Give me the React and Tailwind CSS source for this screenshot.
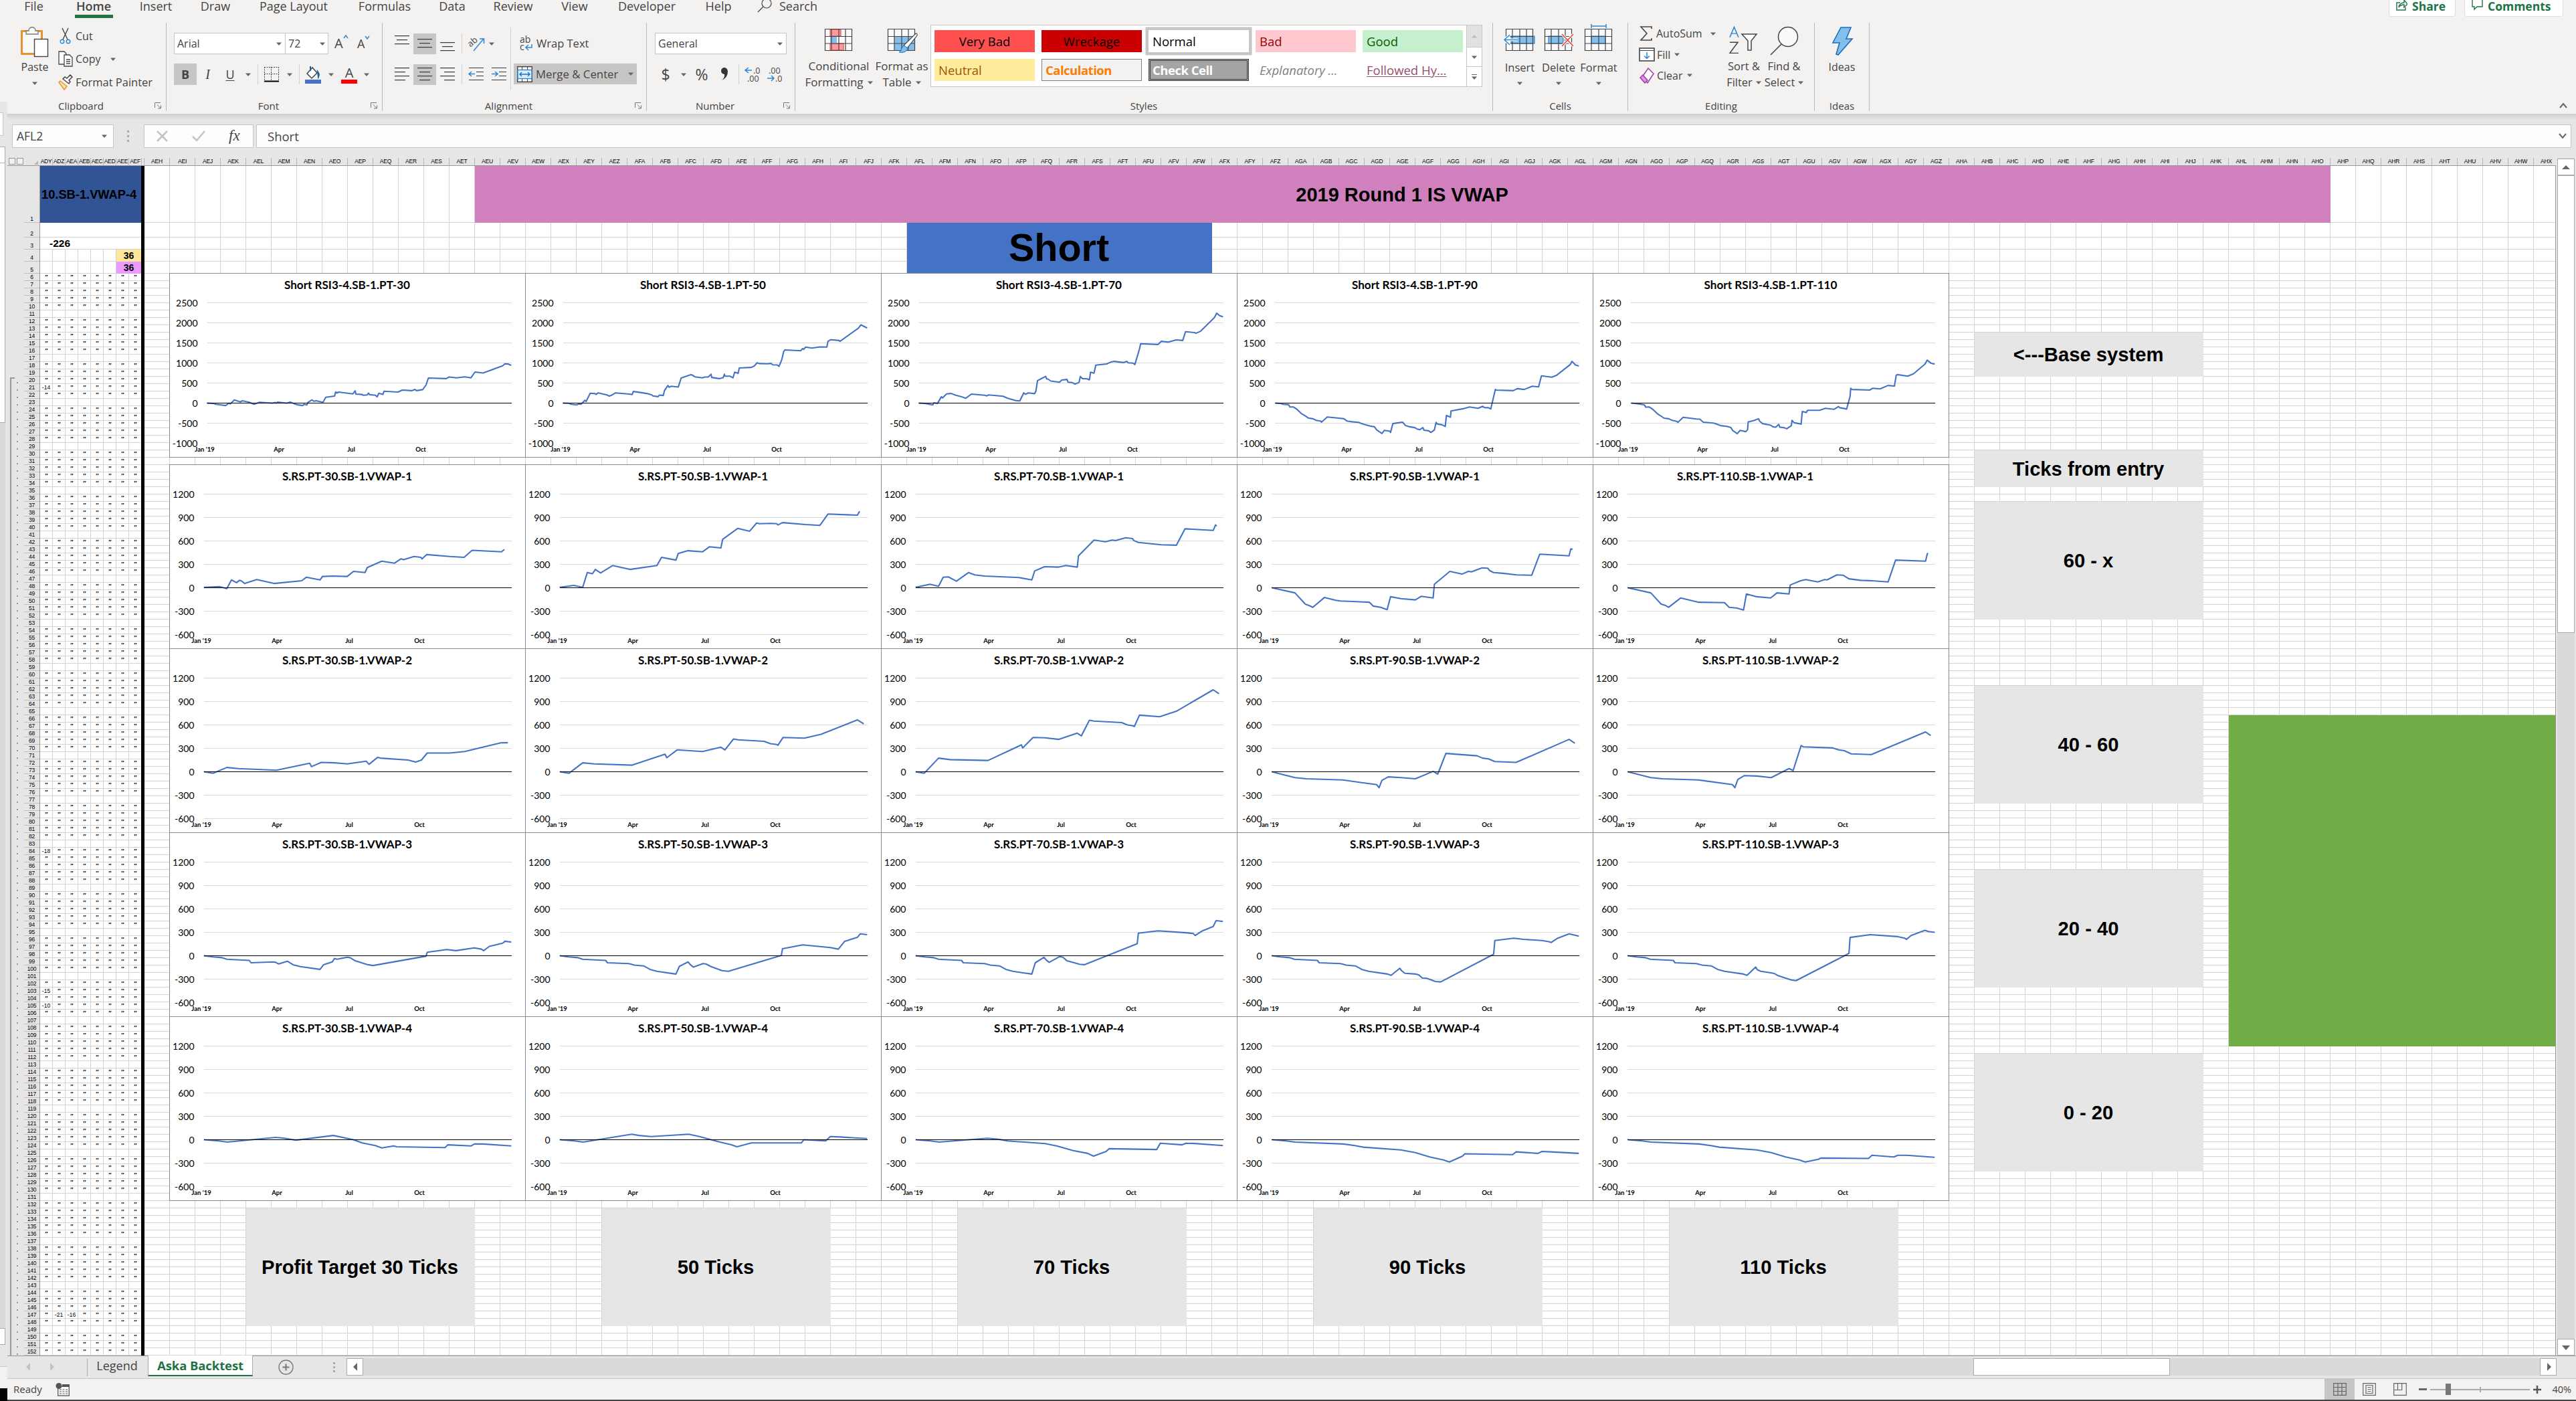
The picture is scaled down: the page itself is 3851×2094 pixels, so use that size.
import React from "react";

const UI = "font-['Open_Sans',sans-serif]";
const ARIAL = "font-['Liberation_Sans',sans-serif]";

/* ---------- chart data: x runs 0-618 over the chart's width ---------- */

const HEAD_3 = "92,-25 100,-45 140,-60 143,-90 180,-100 190,-120 206,-130 217,-175 229,-200 262,-235";

const CHARTS = [
  {
    place: "row-[6/31]",
    base: true,
    items: [
      ["Short RSI3-4.SB-1.PT-30", "65,0 78,-10 81,-30 98,-60 104,0 106,-20 113,80 124,30 127,60 139,20 147,-30 157,20 179,0 184,15 186,0 188,25 204,0 210,25 222,-40 232,-60 234,-30 239,-45 241,20 248,80 251,45 255,60 267,20 272,145 287,175 289,280 291,250 294,275 319,230 323,305 324,225 335,215 337,195 344,205 346,250 348,210 358,195 361,155 364,245 371,215 373,295 397,275 405,325 421,310 427,340 429,310 440,335 446,450 450,625 481,610 486,650 499,630 513,655 524,630 531,775 545,750 579,930 583,980 588,975 594,940"],
      ["Short RSI3-4.SB-1.PT-50", "65,0 76,-5 80,-30 90,-45 93,-20 97,-30 104,70 106,40 113,245 122,235 123,215 127,255 142,205 146,175 150,195 157,255 181,225 186,215 188,290 202,260 213,235 220,205 222,180 231,160 233,200 240,190 242,310 248,440 250,395 254,420 266,400 271,625 281,675 288,710 290,700 295,655 308,630 312,650 318,650 323,720 324,640 337,610 344,635 346,720 347,670 356,670 361,630 364,770 370,740 372,875 393,890 398,925 403,1005 407,985 421,980 427,990 430,955 438,950 441,915 446,1090 449,1280 451,1325 479,1305 482,1360 484,1340 487,1395 498,1370 512,1400 524,1395 526,1540 531,1580 545,1560 547,1540 579,1870 583,1950 594,1870"],
      ["Short RSI3-4.SB-1.PT-70", "65,0 78,-10 90,-45 92,10 98,-10 105,160 107,130 114,230 122,240 129,200 140,160 147,120 157,225 180,195 184,180 187,205 212,170 220,120 233,65 241,55 248,255 251,220 256,255 267,235 269,300 272,560 280,620 286,665 288,600 290,600 295,550 310,520 314,575 323,590 325,520 332,510 337,475 344,515 346,660 350,610 358,605 362,580 364,770 370,745 373,945 392,975 398,1015 405,1040 421,1010 427,1040 429,1005 438,995 441,960 449,1350 451,1480 481,1460 487,1540 499,1520 513,1575 524,1560 529,1780 545,1755 547,1740 555,1790 579,2130 583,2240 588,2180 594,2150"],
      ["Short RSI3-4.SB-1.PT-90", "67,0 77,-10 80,-30 90,-40 92,-95 98,-95 104,-150 112,-260 119,-320 124,-370 132,-390 138,-430 146,-450 147,-475 157,-345 180,-380 186,-390 191,-445 200,-465 211,-480 221,-530 231,-570 239,-590 243,-670 252,-755 256,-680 266,-700 267,-730 271,-510 281,-490 288,-475 293,-560 300,-590 309,-610 313,-645 318,-660 323,-610 325,-675 333,-690 337,-730 343,-670 346,-480 348,-520 356,-540 362,-580 364,-310 371,-350 372,-195 393,-140 404,-95 419,-130 427,-80 430,-110 437,-115 441,-145 449,340 450,325 480,310 487,360 499,340 513,420 524,405 529,680 547,645 555,690 579,960 582,1040 588,950 594,925"],
      ["Short RSI3-4.SB-1.PT-110", "67,0 80,-20 90,-45 92,-100 98,-95 104,-150 112,-260 124,-375 132,-390 138,-430 146,-455 148,-480 157,-355 180,-395 186,-400 192,-475 211,-500 222,-560 233,-580 240,-610 243,-680 251,-760 256,-680 266,-710 269,-660 270,-470 281,-430 288,-390 290,-450 295,-510 309,-550 313,-590 318,-600 323,-530 325,-600 333,-615 337,-640 345,-560 346,-430 350,-490 358,-510 362,-525 364,-210 371,-235 373,-180 394,-180 404,-130 419,-155 427,-85 429,-115 439,-140 441,-150 447,170 448,370 450,340 481,325 486,370 499,355 513,440 524,425 527,690 529,710 547,670 557,730 577,970 581,1070 588,990 594,970"],
    ],
  },
  {
    place: "row-[32/57]",
    items: [
      ["S.RS.PT-30.SB-1.VWAP-1", "60,5 87,15 100,-10 108,100 117,65 122,95 125,90 131,55 152,105 182,55 230,90 238,135 262,100 266,145 283,150 309,145 320,210 340,195 344,260 369,340 391,315 402,370 407,360 425,400 437,390 439,370 447,425 487,400 512,390 526,480 577,460 582,490"],
      ["S.RS.PT-50.SB-1.VWAP-1", "60,5 85,30 100,5 108,195 117,180 122,235 131,190 152,285 182,235 229,285 237,390 262,355 266,440 283,475 308,460 320,525 340,510 343,620 369,760 390,725 402,830 407,820 427,825 437,820 439,805 447,835 487,810 512,800 526,945 577,930 581,980"],
      ["S.RS.PT-70.SB-1.VWAP-1", "60,5 85,45 100,20 108,135 117,140 131,85 152,195 163,165 180,150 240,130 262,100 267,215 284,270 309,265 321,285 341,265 343,410 370,610 390,590 401,610 407,605 425,640 437,630 439,605 447,580 487,550 513,545 528,755 577,735 581,805 583,790"],
      ["S.RS.PT-90.SB-1.VWAP-1", "61,0 101,-65 119,-210 126,-230 132,-250 152,-125 172,-160 180,-170 230,-185 237,-235 250,-250 261,-280 267,-115 285,-140 310,-155 320,-110 341,-130 343,45 370,210 391,175 402,210 408,205 426,255 436,250 439,220 446,195 462,185 486,165 512,160 526,430 577,410 580,500 583,490"],
      ["S.RS.PT-110.SB-1.VWAP-1", "61,0 101,-65 119,-210 126,-225 132,-250 153,-130 183,-185 229,-190 237,-250 250,-260 262,-285 267,-80 285,-115 309,-130 320,-65 341,-80 343,35 361,90 370,105 391,75 403,105 407,100 424,165 435,160 445,115 465,95 485,90 513,75 526,355 578,340 581,430 582,445", 228],
    ],
  },
  {
    place: "row-[57/82]",
    items: [
      ["S.RS.PT-30.SB-1.VWAP-2", "60,0 76,-20 100,55 120,40 186,20 244,110 247,65 264,120 287,115 309,100 342,135 347,95 362,185 367,175 415,150 428,125 438,150 448,240 487,240 513,260 576,370 588,372"],
      ["S.RS.PT-50.SB-1.VWAP-2", "60,0 76,-20 100,115 120,100 186,85 243,225 246,180 264,280 308,260 340,315 347,280 362,420 370,410 415,390 426,360 437,350 439,340 448,440 485,430 514,480 577,665 588,615"],
      ["S.RS.PT-70.SB-1.VWAP-2", "60,0 75,-20 100,175 120,155 186,145 244,345 246,305 264,440 285,435 309,415 341,495 348,460 362,660 370,650 418,630 428,600 437,590 440,580 449,725 484,705 513,775 577,1050 587,1000"],
      ["S.RS.PT-90.SB-1.VWAP-2", "61,0 79,-35 101,-75 121,-90 184,-105 243,-165 247,-205 252,-110 263,-65 285,-75 310,-90 341,5 349,-30 363,235 417,205 427,175 437,165 448,130 485,120 577,415 587,365"],
      ["S.RS.PT-110.SB-1.VWAP-2", "61,0 79,-35 101,-75 121,-90 184,-105 243,-165 247,-205 252,-100 263,-50 285,-55 310,-75 341,40 348,15 362,335 366,320 417,305 427,280 437,270 449,230 484,220 578,510 587,465"],
    ],
  },
  {
    place: "row-[82/107]",
    items: [
      ["S.RS.PT-30.SB-1.VWAP-3", "60,0 76,-15 92,-25 100,-45 139,-60 142,-90 180,-80 185,-85 190,-105 205,-70 215,-115 228,-140 262,-175 268,-115 283,-80 287,-35 291,-45 309,-20 314,-25 323,-65 345,-115 354,-125 446,-5 448,45 482,80 498,65 530,100 542,85 546,65 556,120 579,160 583,185 594,175"],
      ["S.RS.PT-50.SB-1.VWAP-3", `60,0 76,-15 ${HEAD_3} 268,-135 283,-80 287,-115 292,-145 309,-100 314,-105 323,-140 342,-190 353,-200 445,5 447,90 482,140 530,105 544,85 555,185 577,235 582,280 594,270`],
      ["S.RS.PT-70.SB-1.VWAP-3", `60,0 76,-15 ${HEAD_3} 268,-90 283,-20 287,-55 292,-85 308,-20 310,-10 316,-20 323,-65 345,-110 353,-115 445,155 447,290 481,320 530,295 542,285 546,260 557,315 577,375 582,450 594,440`],
      ["S.RS.PT-90.SB-1.VWAP-3", `61,0 76,-15 ${HEAD_3} 268,-250 283,-160 286,-190 292,-225 311,-235 316,-245 322,-285 330,-290 345,-330 354,-335 446,20 448,195 481,225 498,210 530,195 542,180 546,170 556,220 577,280 594,250`],
      ["S.RS.PT-110.SB-1.VWAP-3", `61,0 76,-15 ${HEAD_3} 268,-250 283,-145 286,-180 292,-200 311,-220 316,-230 322,-255 345,-310 353,-320 445,30 447,235 482,270 530,245 542,225 545,210 553,260 577,325 583,310 594,300`],
    ],
  },
  {
    place: "row-[107/132]",
    items: [
      ["S.RS.PT-30.SB-1.VWAP-4", "60,0 86,-15 101,-30 185,30 200,20 220,-5 285,55 320,0 335,-40 358,-75 369,-105 390,-80 395,-90 479,-100 484,-65 524,-80 530,-55 545,-55 594,-80"],
      ["S.RS.PT-50.SB-1.VWAP-4", "60,0 86,-15 101,-30 185,70 198,55 219,40 284,70 303,40 336,-25 358,-65 368,-90 393,-40 480,-40 484,0 522,-15 530,40 542,38 594,15"],
      ["S.RS.PT-70.SB-1.VWAP-4", "60,0 86,-15 101,-30 185,20 205,5 220,-15 285,-50 305,-80 334,-140 359,-175 369,-210 391,-150 396,-115 479,-125 485,-45 523,-65 530,-45 545,-48 594,-75"],
      ["S.RS.PT-90.SB-1.VWAP-4", "61,0 86,-15 101,-30 185,-55 205,-75 220,-95 285,-130 310,-165 335,-220 359,-260 369,-285 392,-210 396,-180 479,-190 485,-155 523,-175 530,-150 545,-155 594,-175"],
      ["S.RS.PT-110.SB-1.VWAP-4", "61,0 86,-15 101,-30 185,-55 205,-75 220,-95 285,-130 310,-165 335,-220 359,-260 369,-285 392,-250 396,-235 479,-240 485,-200 523,-220 530,-200 545,-200 594,-225"],
    ],
  },
];

const CHART_COLS = ["col-[2/16]", "col-[16/30]", "col-[30/44]", "col-[44/58]", "col-[58/72]"];

function LineChart({ title, points, base, titleX = 266, className }) {
  const zero = base ? 194 : 184;
  const unit = base ? 30 / 500 : 35 / 300;
  const left = base ? 57 : 52;
  const labelX = base ? 42.5 : 37.5;
  const ticks = base ? [2500, 2000, 1500, 1000, 500, 0, -500, -1000] : [1200, 900, 600, 300, 0, -300, -600];
  const months = base
    ? [["Jan '19", 53], ["Apr", 164], ["Jul", 272], ["Oct", 376]]
    : [["Jan '19", 48], ["Apr", 161], ["Jul", 269], ["Oct", 374]];
  const line = points
    .split(" ")
    .map((p) => {
      const [x, v] = p.split(",").map(Number);
      return `${((x * 532) / 618).toFixed(1)},${(zero + 0.5 - v * unit).toFixed(1)}`;
    })
    .join(" ");
  const wide = title.includes("110");
  const titleW = base ? (wide ? 199 : 188) : wide ? 204 : 194;
  return (
    <svg className={`-ml-px -mt-px h-[276px] w-[533px] font-['Lato',sans-serif] font-normal ${className}`} viewBox="0 0 533 276">
      <rect x="0.5" y="0.5" width="532" height="275" fill="#fff" stroke="#8a8a8a" />
      <text x={titleX} y="24" textAnchor="middle" fontSize="17.5" fontWeight="700" textLength={titleW} lengthAdjust="spacingAndGlyphs">
        {title}
      </text>
      {ticks.map((t) => {
        const y = zero - t * unit + 0.5;
        return (
          <g key={t}>
            {t !== 0 && <line x1={left} x2="512" y1={y} y2={y} stroke="#d9d9d9" />}
            <text x={labelX} y={y + 5} textAnchor="end" fontSize="14">{t}</text>
          </g>
        );
      })}
      <polyline points={line} fill="none" stroke="#4472c4" strokeWidth="2.1" strokeLinejoin="round" />
      <line x1={left} x2="512" y1={zero + 0.5} y2={zero + 0.5} stroke="#000" />
      {months.map(([m, x]) => (
        <text key={m} x={x} y="267" textAnchor="middle" fontSize="9.5" fontWeight="700">{m}</text>
      ))}
    </svg>
  );
}

/* ---------- small pieces ---------- */

function Caret({ className = "" }) {
  return (
    <svg className={`h-[5px] w-2 shrink-0 ${className}`} viewBox="0 0 8 5">
      <path d="M0 0.5h8L4 5z" fill="#666" />
    </svg>
  );
}

function Lines({ rows, className = "" }) {
  return (
    <svg className={`h-[31px] w-[34px] ${className}`} viewBox="0 0 34 31">
      {rows.map(([x, w, y]) => (
        <rect key={y} x={x} y={y} width={w} height="1.2" fill="#3b3b3b" />
      ))}
    </svg>
  );
}

function Group({ label, width, launcher, children }) {
  return (
    <div className={`mt-[34px] flex h-[132px] shrink-0 flex-col border-r border-[#bdbbb9] ${width}`}>
      <div className="flex h-[116px]">{children}</div>
      <div className="flex h-4 items-center text-[15px] leading-4">
        <span className="flex-1 text-center">{label}</span>
        {launcher && (
          <svg className="mr-[6px] h-[10px] w-[11px]" viewBox="0 0 11 10" fill="none" stroke="#777">
            <path d="M0.5 8V0.5H9M4 3.5l5 5M9.5 4.5v4.5H5" />
          </svg>
        )}
      </div>
    </div>
  );
}

function TableIcon({ accent, children }) {
  return (
    <svg className="h-[46px] w-[50px]" viewBox="0 0 50 46">
      <rect x="4" y="9" width="41" height="33" fill="#fafafa" />
      {accent}
      <path d="M4.5 9v33M14 9v33M35 9v33M44.5 9v33M25 9v33M4 9.5h41M4 20.5h41M4 31h41M4 41.5h41" stroke="#444" strokeWidth="1.2" fill="none" />
      {children}
    </svg>
  );
}

function Sep({ className = "" }) {
  return <div className={`w-px shrink-0 bg-[#d2d0ce] ${className}`} />;
}

/* ---------- ribbon ---------- */

const TABS = [
  ["File", "w-[79px]"],
  ["Home", "w-[100px] font-semibold"],
  ["Insert", "w-[86px]"],
  ["Draw", "w-[92px]"],
  ["Page Layout", "w-[142px]"],
  ["Formulas", "w-[130px]"],
  ["Data", "w-[72px]"],
  ["Review", "w-[110px]"],
  ["View", "w-[74px]"],
  ["Developer", "w-[142px]"],
  ["Help", "w-[72px]"],
];

function TabStrip() {
  return (
    <div className="-mb-[34px] flex h-[34px] justify-between text-[18px] leading-[18px]">
      <div className="flex">
        {TABS.map(([t, w]) => (
          <div key={t} className={`flex h-[27px] shrink-0 flex-col items-center ${w}`}>
            <span className="whitespace-nowrap">{t}</span>
            {t === "Home" && <span className="mt-1 h-[5px] w-[57px] shrink-0 bg-[#217346]" />}
          </div>
        ))}
        <svg className="ml-[21px] h-5 w-6" viewBox="0 0 24 20" fill="none" stroke="#444" strokeWidth="1.2">
          <circle cx="15" cy="5" r="7" />
          <path d="M10 10L2 18" />
        </svg>
        <span className="ml-[10px]">Search</span>
      </div>
      <div className="mr-[19px] flex gap-[13px] font-bold text-[#217346]">
        <div className="flex h-[25px] w-[100px] items-start gap-[7px] rounded-b border-x border-b border-[#e1dfdd] bg-white pl-[10px]">
          <svg className="h-4 w-[17px]" viewBox="0 0 17 16" fill="none" stroke="#217346" strokeWidth="1.4">
            <path d="M6 4H1v11h13v-4M4 11c1-5 4-7 8-7V0l5 6-5 5V7c-4 0-6 1-8 4z" />
          </svg>
          <span className="text-[17.5px]">Share</span>
        </div>
        <div className="flex h-[25px] w-[148px] items-start gap-[7px] rounded-b border-x border-b border-[#e1dfdd] bg-white pl-[10px]">
          <svg className="h-4 w-[17px]" viewBox="0 0 17 16" fill="none" stroke="#217346" strokeWidth="1.4">
            <path d="M1 0v10h3v4l4-4h8V0" />
          </svg>
          <span className="text-[17.5px]">Comments</span>
        </div>
      </div>
    </div>
  );
}

function ClipboardGroup() {
  return (
    <Group label="Clipboard" width="w-[238px]" launcher>
      <div className="ml-[16px] flex w-[50px] flex-col items-center pt-[6px]">
        <svg className="h-[46px] w-[42px]" viewBox="0 0 42 46">
          <rect x="1.5" y="6.500" width="30" height="34" fill="#fafafa" stroke="#e8912d" strokeWidth="3" />
          <path d="M8 11V6h4c0-7 10-7 10 0h4v5z" fill="#fafafa" stroke="#777" strokeWidth="1.3" />
          <rect x="20.500" y="18.500" width="20" height="26" fill="#fff" stroke="#444" strokeWidth="1.4" />
        </svg>
        <span className="mt-1 leading-5">Paste</span>
        <Caret className="mt-3" />
      </div>
      <div className="ml-[10px] flex flex-col pt-[3px]">
        <div className="flex h-[33px] items-center gap-[4px]">
          <svg className="h-[26px] w-[22px]" viewBox="0 0 22 26" fill="none" strokeWidth="1.400">
            <path d="M6 1l8 17M15 1L7 18" stroke="#444" />
            <circle cx="6" cy="21" r="2.800" stroke="#2b88d8" />
            <circle cx="15" cy="21" r="2.800" stroke="#2b88d8" />
          </svg>
          Cut
        </div>
        <div className="flex h-[36px] items-center gap-[4px]">
          <svg className="h-6 w-[22px]" viewBox="0 0 22 24" fill="#fff" stroke="#444" strokeWidth="1.300">
            <path d="M1 1h8l3 3v16H1z" />
            <path d="M9 6h8l4 4v13H9zM12 13h6M12 16h6M12 19h6" />
          </svg>
          Copy <Caret className="ml-[10px]" />
        </div>
        <div className="flex h-[34px] items-center gap-[4px]">
          <svg className="h-6 w-[22px]" viewBox="0 0 22 24" strokeWidth="1.500">
            <path d="M3 10l10 8-4 5-8-11z" fill="#fbe0b8" stroke="#e8912d" />
            <path d="M7 7l9 7 2-3-2-2 5-5-3-3-5 5-3-2z" fill="#fff" stroke="#444" />
          </svg>
          <span className="whitespace-nowrap text-[16.5px]">Format Painter</span>
        </div>
      </div>
    </Group>
  );
}

function FontGroup() {
  return (
    <Group label="Font" width="w-[323px]" launcher>
      <div className="ml-[11px] flex flex-col pt-[15px]">
        <div className="flex h-8 items-center">
          <div className="flex h-8 w-[167px] items-center justify-between border border-[#c6c6c6] bg-white pl-1 pr-[5px]">Arial <Caret /></div>
          <div className="flex h-8 w-[64px] items-center justify-between border border-l-0 border-[#c6c6c6] bg-white px-1">72 <Caret /></div>
          <div className="ml-[9px] flex w-[34px] text-[20px]">A<svg className="h-2 w-2" viewBox="0 0 8 8"><path d="M1 7l3-4 3 4" stroke="#2b88d8" strokeWidth="1.500" fill="none" /></svg></div>
          <div className="flex text-[18px]">A<svg className="h-2 w-2" viewBox="0 0 8 8"><path d="M1 2l3 4 3-4" stroke="#2b88d8" strokeWidth="1.500" fill="none" /></svg></div>
        </div>
        <div className="mt-[14px] flex h-[32px] items-center text-[18px]">
          <div className="flex h-8 w-[34px] items-center justify-center bg-[#c8c6c4] font-bold">B</div>
          <div className="w-[33px] text-center font-['Liberation_Serif',serif] text-[20px] italic">I</div>
          <div className="w-[34px] text-center underline underline-offset-2">U</div>
          <div className="flex w-5 justify-center"><Caret /></div>
          <Sep className="mx-1 h-[30px]" />
          <svg className="h-[26px] w-8" viewBox="0 0 32 26" fill="none">
            <path d="M5 2.500h22M5 12.500h22M5.500 2v20M15.500 2v20M26.500 2v20" stroke="#444" strokeDasharray="2 1.500" />
            <path d="M5 23.500h22" stroke="#000" strokeWidth="2" />
          </svg>
          <div className="flex w-[22px] justify-center"><Caret /></div>
          <Sep className="mx-[3px] h-[30px]" />
          <svg className="h-[27px] w-[34px]" viewBox="0 0 34 27">
            <path d="M8 12l8-9 7 8-8 8z" fill="#fff" stroke="#444" strokeWidth="1.500" />
            <path d="M13 1v7M24 9q3 4 1 8z" stroke="#1b5fa8" strokeWidth="2" fill="#1b5fa8" />
            <rect x="5" y="21" width="24" height="6" fill="#4472c4" />
          </svg>
          <div className="flex w-5 justify-center"><Caret /></div>
          <div className="flex w-[34px] flex-col items-center">
            <span className="h-[21px] text-[20px] leading-[21px]">A</span>
            <span className="h-[6px] w-6 bg-[#ff0000]" />
          </div>
          <div className="flex w-[18px] justify-center"><Caret /></div>
        </div>
      </div>
    </Group>
  );
}

function Indent({ flip }) {
  return (
    <svg className="h-[31px] w-[34px]" viewBox="0 0 34 31">
      <path d="M6 5.500h22M17 11.500h11M17 17.500h11M6 23.500h22" stroke="#3b3b3b" strokeWidth="1.200" />
      <path d={flip ? "M6 14.500h8M11 11l4 3.500-4 3.500" : "M15 14.500H7M10 11l-4 3.500 4 3.500"} stroke="#2b88d8" strokeWidth="1.600" fill="none" />
    </svg>
  );
}

function AlignmentGroup() {
  return (
    <Group label="Alignment" width="w-[395px]" launcher>
      <div className="ml-[12px] flex flex-col pt-[15px]">
        <div className="flex h-8 items-center">
          <Lines rows={[[6, 22, 3], [9, 16, 9], [6, 22, 15]]} />
          <Lines className="bg-[#c8c6c4]" rows={[[6, 22, 8], [9, 16, 14], [6, 22, 20]]} />
          <Lines rows={[[6, 22, 13], [9, 16, 19], [6, 22, 25]]} />
          <Sep className="ml-1 h-[30px]" />
          <svg className="ml-[9px] h-[26px] w-7" viewBox="0 0 28 26">
            <text x="0" y="14" fontSize="13" fill="#444" transform="rotate(-40 8 12)">ab</text>
            <path d="M8 24L23 6M17 6h6.500v7" stroke="#2b88d8" strokeWidth="1.500" fill="none" />
          </svg>
          <Caret className="ml-[3px]" />
        </div>
        <div className="mt-[14px] flex h-8 items-center">
          <Lines rows={[[6, 22, 5], [6, 16, 11], [6, 22, 17], [6, 16, 23]]} />
          <Lines className="bg-[#c8c6c4]" rows={[[6, 22, 5], [9, 16, 11], [6, 22, 17], [9, 16, 23]]} />
          <Lines rows={[[6, 22, 5], [12, 16, 11], [6, 22, 17], [12, 16, 23]]} />
          <Sep className="mx-1 h-[30px]" />
          <Indent />
          <Indent flip />
        </div>
      </div>
      <Sep className="mt-[7px] h-[93px]" />
      <div className="ml-1 flex flex-col pt-[15px]">
        <div className="flex h-8 items-center pl-2">
          <svg className="h-[26px] w-[22px]" viewBox="0 0 22 26">
            <text x="1" y="12" fontSize="14" fill="#444">ab</text>
            <text x="1" y="23" fontSize="14" fill="#444">c</text>
            <path d="M19 14v5h-8M14 15l-4 4 4 4" stroke="#2b88d8" strokeWidth="1.500" fill="none" />
          </svg>
          <span className="ml-[4px] whitespace-nowrap text-[16.5px]">Wrap Text</span>
        </div>
        <div className="mt-[14px] flex h-[31px] w-[184px] items-center bg-[#c8c6c4] pl-[5px] text-[16.8px]">
          <svg className="h-[24px] w-[23px]" viewBox="0 0 23 24" fill="none">
            <rect x="0.700" y="0.700" width="21.600" height="22.600" fill="#fff" stroke="#444" strokeWidth="1.400" />
            <path d="M7.500 1v4M15.500 1v4M7.500 19v4M15.500 19v4" stroke="#444" />
            <rect x="1" y="5.500" width="21" height="13" fill="#deecf9" stroke="#2b88d8" strokeWidth="1.400" />
            <path d="M4 12h15M7 9l-3 3 3 3M16 9l3 3-3 3" stroke="#1a6fc0" strokeWidth="1.400" />
          </svg>
          <span className="ml-[5px] whitespace-nowrap">Merge &amp; Center</span>
          <Caret className="ml-auto mr-[5px]" />
        </div>
      </div>
    </Group>
  );
}

function Decimal({ more }) {
  return (
    <svg className="h-[24px] w-[35px]" viewBox="0 0 35 24">
      <text x={more ? 16 : 4} y="11" fontSize="12.500" fill="#444">{more ? ".0" : ".00"}</text>
      <text x={more ? 7 : 14} y="23" fontSize="12.500" fill="#444">{more ? ".00" : ".0"}</text>
      <path d={more ? "M14 6H5M9 2L4 6l5 4" : "M2 18h9M8 14l4 4-4 4"} stroke="#2b88d8" strokeWidth="1.600" fill="none" />
    </svg>
  );
}

function NumberGroup() {
  return (
    <Group label="Number" width="w-[222px]" launcher>
      <div className="ml-[12px] flex flex-col pt-[15px]">
        <div className="flex h-8 w-[197px] items-center justify-between border border-[#c6c6c6] bg-white pl-1 pr-[5px]">General <Caret /></div>
        <div className="mt-[14px] flex h-8 items-center text-[23px]">
          <span className="w-8 text-center">$</span>
          <Caret className="ml-[7px]" />
          <span className="ml-[7px] w-8 text-center">%</span>
          <svg className="ml-3 h-5 w-3" viewBox="0 0 12 20"><path d="M6 0a5 5 0 1 0 0 10q1 5-4 9 9-4 9-13a5 6 0 0 0-5-6z" fill="#333" /></svg>
          <Sep className="ml-[15px] h-[30px]" />
          <span className="ml-[5px] flex"><Decimal more /><Decimal /></span>
        </div>
      </div>
    </Group>
  );
}

const STYLE_CELLS = [
  ["Very Bad", "bg-[#ff5050] text-black justify-center"],
  ["Wreckage", "bg-[#cc0000] text-black justify-center"],
  ["Normal", "bg-white text-black ring-[4.5px] ring-[#c6c6c6] pl-[6px]"],
  ["Bad", "bg-[#ffc7ce] text-[#9c0006] pl-[6px]"],
  ["Good", "bg-[#c6efce] text-[#006100] pl-[6px]"],
  ["Neutral", "bg-[#ffeb9c] text-[#9c5700] pl-[6px]"],
  ["Calculation", "bg-[#f2f2f2] text-[#fa7d00] font-bold border border-[#7f7f7f] pl-[5px] tracking-[-0.5px]"],
  ["Check Cell", "bg-[#a5a5a5] text-white font-bold border-[3px] border-double border-[#3f3f3f] pl-[3px] tracking-[-0.5px]"],
  ["Explanatory ...", "text-[#7f7f7f] italic pl-[6px]"],
  ["Followed Hy...", "text-[#954f72] underline underline-offset-2 pl-[6px]"],
];

function StylesGroup() {
  return (
    <Group label="Styles" width="w-[1043px]">
      <div className="ml-[11px] flex w-[108px] flex-col items-center text-[17px] leading-[24px]">
        <TableIcon accent={<g stroke="#e03c31"><rect x="12" y="10" width="16" height="10" fill="#ff9aa0" /><rect x="12" y="31" width="20" height="10" fill="#ff9aa0" /><rect x="12" y="21" width="10" height="10" fill="#83beec" stroke="none" /></g>} />
        <span className="mt-[7px]">Conditional</span>
        <span className="flex items-center gap-[6px] whitespace-nowrap">Formatting <Caret /></span>
      </div>
      <div className="flex w-[80px] flex-col items-center text-[17px] leading-[24px]">
        <TableIcon accent={<rect x="14" y="20" width="31" height="21" fill="#83beec" />}>
          <path d="M46 16q3 0 2 3L33 38l-5-4z" fill="#fff" stroke="#444" strokeWidth="1.200" />
          <path d="M28 34l6 4q-2 8-13 6 4-2 4-6z" fill="#83beec" stroke="#1a6fc0" />
        </TableIcon>
        <span className="mt-[7px] whitespace-nowrap">Format as</span>
        <span className="flex items-center gap-[6px]">Table <Caret /></span>
      </div>
      <div className="ml-[3px] mt-[3px] flex h-[93px] w-[825px] border border-[#c6c6c6] bg-white">
        <div className="grid w-[800px] grid-cols-[repeat(5,150px)] content-start gap-[10px] pl-[5px] pt-[7px] text-[18.5px]">
          {STYLE_CELLS.map(([t, c]) => (
            <div key={t} className={`flex h-[33px] items-center whitespace-nowrap ${c}`}>{t}</div>
          ))}
        </div>
        <div className="flex w-[23px] flex-col border-l border-[#c6c6c6]">
          <div className="flex h-8 items-center justify-center bg-[#e1e1e1]"><Caret className="rotate-180 opacity-30" /></div>
          <div className="flex h-[30px] items-center justify-center border-y border-[#c6c6c6]"><Caret /></div>
          <div className="flex flex-1 flex-col items-center justify-center gap-[2px]"><span className="h-px w-2 bg-[#666]" /><Caret /></div>
        </div>
      </div>
    </Group>
  );
}

function CellsGroup() {
  const big = "flex flex-col items-center";
  return (
    <Group label="Cells" width="w-[202px]">
      <div className="ml-[11px] flex text-[16.500px]">
        <div className={`w-[58px] ${big}`}>
          <TableIcon accent={<rect x="12" y="20" width="35" height="11" fill="#83beec" stroke="#1a6fc0" />}>
            <path d="M22 25.500H3M10 18l-8 7.500 8 7.500" stroke="#fff" strokeWidth="4" fill="none" />
            <path d="M22 25.500H3M10 18l-8 7.500 8 7.500" stroke="#2b88d8" strokeWidth="1.600" fill="none" />
          </TableIcon>
          <span className="mt-[9px] leading-6">Insert</span><Caret className="mt-[9px]" />
        </div>
        <div className={`w-[58px] ${big}`}>
          <TableIcon accent={<rect x="10" y="20" width="22" height="11" fill="#83beec" stroke="#1a6fc0" />}>
            <path d="M30 17l17 18M47 17L30 35" stroke="#fff" strokeWidth="4" />
            <path d="M30 17l17 18M47 17L30 35" stroke="#e8453c" strokeWidth="1.700" />
          </TableIcon>
          <span className="mt-[9px] leading-6">Delete</span><Caret className="mt-[9px]" />
        </div>
        <div className={`w-[62px] ${big}`}>
          <TableIcon accent={<rect x="14" y="20" width="21" height="11" fill="#83beec" stroke="#1a6fc0" />}>
            <path d="M14 5h22M14 2v6M36 2v6" stroke="#2b88d8" strokeWidth="1.500" />
          </TableIcon>
          <span className="mt-[9px] leading-6">Format</span><Caret className="mt-[9px]" />
        </div>
      </div>
    </Group>
  );
}

function EditingGroup() {
  return (
    <Group label="Editing" width="w-[279px]">
      <div className="ml-[16px] flex w-[130px] flex-col">
        <div className="flex h-8 items-center">
          <svg className="h-6 w-[22px]" viewBox="0 0 22 24" fill="none"><path d="M19 5V2H3l9 10-9 10h16v-3" stroke="#444" strokeWidth="1.600" /></svg>
          <span className="ml-[4px]">AutoSum</span><Caret className="ml-[12px]" />
        </div>
        <div className="flex h-[31px] items-center">
          <svg className="h-[21px] w-6" viewBox="0 0 24 21" fill="none"><rect x="1" y="1" width="22" height="19" fill="#fff" stroke="#444" strokeWidth="1.600" /><path d="M1 4.500h22" stroke="#444" /><path d="M12 7v9M8 12.500l4 4 4-4" stroke="#2b88d8" strokeWidth="1.500" /></svg>
          <span className="ml-[3px]">Fill</span><Caret className="ml-[6px]" />
        </div>
        <div className="flex h-[31px] items-center">
          <svg className="h-6 w-6" viewBox="0 0 24 24" strokeWidth="1.500" stroke="#a03ab0"><path d="M14 1l8 8-9 14-8-9z" fill="#fff" /><path d="M6 11l7 8-4 4-7-8z" fill="#d59ae0" /></svg>
          <span className="ml-[3px]">Clear</span><Caret className="ml-[6px]" />
        </div>
      </div>
      <div className="-ml-[3px] flex w-[60px] flex-col items-center text-[16.500px] leading-[24px]">
        <svg className="h-[46px] w-[46px]" viewBox="0 0 46 46" fill="none">
          <path d="M2 26L8.500 7 15 26M4.500 19h8" stroke="#2b88d8" strokeWidth="1.600" transform="translate(0 1) scale(1 .8)" />
          <path d="M2 28h12L2 46h13" stroke="#444" strokeWidth="1.600" transform="translate(0 4) scale(1 .9)" />
          <path d="M20 17h22l-8 10v14h-5V27z" stroke="#444" strokeWidth="1.500" fill="#fff" />
        </svg>
        <span className="mt-[7px] whitespace-nowrap">Sort &amp;</span>
        <span className="flex items-center gap-[5px]">Filter <Caret /></span>
      </div>
      <div className="flex w-[60px] flex-col items-center text-[16.500px] leading-[24px]">
        <svg className="h-[50px] w-[46px]" viewBox="0 0 46 50" fill="none">
          <circle cx="29" cy="21" r="14.500" fill="#fafafa" stroke="#444" strokeWidth="1.500" />
          <path d="M19 32L3 48" stroke="#444" strokeWidth="1.600" />
        </svg>
        <span className="mt-[3px] whitespace-nowrap">Find &amp;</span>
        <span className="flex items-center gap-[5px]">Select <Caret /></span>
      </div>
    </Group>
  );
}

function Ribbon() {
  return (
    <div className="h-[170px] bg-[#f3f2f1] text-[16px] text-[#444]">
      <TabStrip />
      <div className="flex">
        <ClipboardGroup />
        <FontGroup />
        <AlignmentGroup />
        <NumberGroup />
        <StylesGroup />
        <CellsGroup />
        <EditingGroup />
        <Group label="Ideas" width="w-[82px]">
          <div className="flex w-full flex-col items-center pt-[6px]">
            <svg className="h-[43px] w-[34px]" viewBox="0 0 34 43"><path d="M15 1h15l-7 17h9L11 42 8 41l5-17H3z" fill="#83beec" stroke="#1a6fc0" strokeWidth="1.600" /></svg>
            <span className="mt-[7px] leading-5">Ideas</span>
          </div>
        </Group>
        <svg className="ml-auto mr-[13px] mt-[153px] h-[9px] w-[12px]" viewBox="0 0 12 9"><path d="M1 8l5-6 5 6" stroke="#666" strokeWidth="2" fill="none" /></svg>
      </div>
    </div>
  );
}

function FormulaBar() {
  const box = "flex h-[35px] items-center border border-[#c6c6c6] bg-[#fdfdfd]";
  return (
    <div className="flex h-[66px] bg-[#e6e6e6] bg-linear-to-b from-[#cfcfcf] from-0% to-[#e6e6e6] to-[14%] pl-[7px] pt-4 text-[18px] text-[#444]">
      <div className={`w-[152px] justify-between pl-[6px] pr-[9px] text-[17.500px] ${box}`}>AFL2 <Caret /></div>
      <div className="ml-[20px] flex flex-col gap-1 pt-[9px]">
        <span className="h-[3px] w-[3px] bg-[#aaa]" /><span className="h-[3px] w-[3px] bg-[#aaa]" /><span className="h-[3px] w-[3px] bg-[#aaa]" />
      </div>
      <div className={`ml-[22px] w-[164px] gap-[35px] pl-[17px] ${box}`}>
        <svg className="h-[17px] w-[19px]" viewBox="0 0 19 17"><path d="M2 1l15 15M17 1L2 16" stroke="#c3c3c3" strokeWidth="2.500" /></svg>
        <svg className="h-[17px] w-[20px]" viewBox="0 0 20 17"><path d="M1 9l6 6L19 1" stroke="#c3c3c3" strokeWidth="2.500" fill="none" /></svg>
        <span className="font-['Liberation_Serif',serif] text-[23px] italic text-[#444]">fx</span>
      </div>
      <div className={`ml-1 w-[3461px] justify-between pl-[16px] pr-[6px] text-[18.500px] ${box}`}>
        Short
        <svg className="h-[9px] w-[12px]" viewBox="0 0 12 9"><path d="M1 1l5 6 5-6" stroke="#666" strokeWidth="2" fill="none" /></svg>
      </div>
    </div>
  );
}

/* ---------- worksheet ---------- */

const ROWS = Array.from({ length: 152 }, (_, i) => i + 1);
const ROW_H = { 1: "h-[85px]", 2: "h-[22px]", 3: "h-[18px]", 4: "h-[18px]", 5: "h-[18px]" };
const LEFT_COLS = ["ADY", "ADZ", "AEA", "AEB", "AEC", "AED", "AEE", "AEF"];
const MAIN_COLS = Array.from({ length: 95 }, (_, i) => {
  const n = i + 7;
  return "A" + "EFGH"[Math.floor(n / 26)] + String.fromCharCode(65 + (n % 26));
});
const VALUES = { "21-0": "-14", "84-0": "-18", "103-0": "-15", "105-0": "-10", "147-1": "-21", "147-2": "-16" };

function ColumnHeaders() {
  const cell = "flex h-[11px] shrink-0 items-center justify-center overflow-hidden border-r border-[#b5b5b5]";
  return (
    <div className={`flex h-3 overflow-hidden border-b border-[#999] text-[8.500px] leading-[11px] text-black ${ARIAL}`}>
      <div className="flex w-[49px] shrink-0 items-start gap-[2px] pl-[2px]">
        <span className="h-[10px] w-[10px] border border-[#999] bg-[#f0f0f0]" />
        <span className="h-[10px] w-[10px] border border-[#999] bg-[#f0f0f0]" />
        <svg className="ml-auto mr-[3px] mt-1 h-[6px] w-[6px]" viewBox="0 0 6 6"><path d="M6 0v6H0z" fill="#b5b5b5" /></svg>
      </div>
      {LEFT_COLS.map((c) => <div key={c} className={`w-[19px] tracking-[-0.3px] ${cell}`}>{c}</div>)}
      <div className={`w-1 ${cell}`} />
      {MAIN_COLS.map((c) => <div key={c} className={`w-[38px] tracking-[-0.2px] ${cell}`}>{c}</div>)}
    </div>
  );
}

function RowHeaders() {
  return (
    <div className="flex w-[49px] shrink-0">
      <div className="w-[25px] pl-1 pt-[316px]">
        <div className="flex h-[1462px] flex-col border-l-2 border-[#999]">
          <div className="h-[2px] w-[5px] shrink-0 bg-[#999]" />
          {ROWS.slice(19).map((r) => (
            <div key={r} className="flex h-[11px] shrink-0 items-center pl-2"><span className="h-[2px] w-[2px] bg-[#999]" /></div>
          ))}
        </div>
      </div>
      <div className={`flex w-6 flex-col border-r border-[#999] text-[8.500px] leading-[8px] text-black ${ARIAL}`}>
        {ROWS.map((r) => (
          <div key={r} className={`flex shrink-0 items-end justify-center border-b border-[#c0c0c0] pb-px tracking-[-0.3px] ${ROW_H[r] || "h-[11px]"}`}>{r}</div>
        ))}
      </div>
    </div>
  );
}

function LeftColumns() {
  return (
    <div className={`flex w-[151px] shrink-0 flex-col overflow-hidden bg-white text-black ${ARIAL}`}>
      <div className="flex h-[85px] items-center whitespace-nowrap bg-[#305496] pl-[2px] text-[18.300px] font-bold">10.SB-1.VWAP-4</div>
      <div className="h-[22px] border-b border-[#d4d4d4]" />
      <div className="flex h-[18px] items-center border-b border-[#d4d4d4] pl-[14px] text-[15.500px] font-bold leading-[17px]">-226</div>
      {["bg-[#ffe699]", "bg-[#eb9bff]"].map((bg) => (
        <div key={bg} className="flex h-[18px]">
          {[0, 1, 2, 3, 4, 5].map((i) => <div key={i} className="w-[19px] border-b border-r border-[#d4d4d4]" />)}
          <div className={`flex w-[37px] items-center justify-center text-[14px] font-bold ${bg}`}>36</div>
        </div>
      ))}
      {ROWS.slice(5).map((r) => (
        <div key={r} className="flex h-[11px] shrink-0">
          {LEFT_COLS.map((c, i) => {
            const v = VALUES[`${r}-${i}`];
            return (
              <div key={c} className="flex h-[11px] w-[19px] shrink-0 justify-center border-b border-r border-[#d4d4d4]">
                {v ? <span className="text-[8.500px] leading-[10px]">{v}</span> : r % 6 !== 5 && <span className="pt-px text-[9px] font-bold italic leading-[9px]">″</span>}
              </div>
            );
          })}
        </div>
      ))}
    </div>
  );
}

const GREY = [
  ["<---Base system", "col-[73/82] row-[14/20]"],
  ["Ticks from entry", "col-[73/82] row-[30/35]"],
  ["60 - x", "col-[73/82] row-[37/53]"],
  ["40 - 60", "col-[73/82] row-[62/78]"],
  ["20 - 40", "col-[73/82] row-[87/103]"],
  ["0 - 20", "col-[73/82] row-[112/128]"],
  ["Profit Target 30 Ticks", "col-[5/14] row-[133/149]"],
  ["50 Ticks", "col-[19/28] row-[133/149]"],
  ["70 Ticks", "col-[33/42] row-[133/149]"],
  ["90 Ticks", "col-[47/56] row-[133/149]"],
  ["110 Ticks", "col-[61/70] row-[133/149]"],
];

function MainGrid() {
  return (
    <div className="w-[3605px] shrink-0 overflow-hidden border-r border-[#999] bg-white">
      <div className={`grid w-[3610px] grid-cols-[repeat(95,38px)] grid-rows-[85px_22px_18px_18px_18px_repeat(147,11px)] bg-[linear-gradient(to_right,transparent_37px,#d4d4d4_37px)] bg-[length:38px_100%] font-bold text-black ${ARIAL}`}>
        <div className="col-[1/96] row-[1/2] border-b border-[#d4d4d4]" />
        <div className="col-[1/96] row-[2/3] border-b border-[#d4d4d4]" />
        <div className="col-[1/96] row-[3/4] border-b border-[#d4d4d4]" />
        <div className="col-[1/96] row-[4/5] border-b border-[#d4d4d4]" />
        <div className="col-[1/96] row-[5/6] border-b border-[#d4d4d4]" />
        <div className="col-[1/96] row-[6/153] bg-[linear-gradient(to_bottom,transparent_10px,#d4d4d4_10px)] bg-[length:100%_11px]" />
        <div className="col-[14/87] row-[1/2] flex items-center justify-center bg-[#cf80bd] pr-[2px] pt-[2px] text-[29px]">2019 Round 1 IS VWAP</div>
        <div className="col-[31/43] row-[2/6] flex items-center justify-center bg-[#4472c4] pr-[2px] text-[57.500px] leading-none">Short</div>
        {GREY.map(([t, place]) => (
          <div key={t} className={`flex items-center justify-center whitespace-nowrap bg-[#e6e6e6] pr-[2px] pt-[2px] text-[29.200px] ${place}`}>{t}</div>
        ))}
        <div className="col-[83/96] row-[66/111] bg-[#70ad47]" />
        {CHARTS.map((row) =>
          row.items.map(([title, points, titleX], i) => (
            <LineChart key={title} title={title} points={points} base={row.base} titleX={titleX} className={`${CHART_COLS[i]} ${row.place}`} />
          ))
        )}
      </div>
    </div>
  );
}

function ScrollArrow({ className, d }) {
  return (
    <div className={`flex shrink-0 items-center justify-center border border-[#ababab] bg-white ${className}`}>
      <svg className="h-3 w-3" viewBox="0 0 12 12"><path d={d} fill="#666" /></svg>
    </div>
  );
}

function Worksheet() {
  return (
    <div className="flex h-[1790px] bg-[#e6e6e6]">
      <div className="flex w-[3810px] shrink-0 flex-col">
        <ColumnHeaders />
        <div className="flex h-[1778px] overflow-hidden">
          <RowHeaders />
          <LeftColumns />
          <div className="w-[5px] shrink-0 bg-black" />
          <MainGrid />
        </div>
      </div>
      <div className="ml-[2px] flex w-[26px] flex-col bg-[#dadada] pt-px">
        <ScrollArrow className="h-[25px]" d="M6 3l6 6H0z" />
        <div className="h-[684px] border border-[#ababab] bg-white" />
        <ScrollArrow className="mt-auto h-[25px]" d="M0 3h12L6 10z" />
      </div>
    </div>
  );
}

function SheetTabs() {
  return (
    <div className="flex h-[35px] border-b border-t border-[#c6c6c6] border-t-[#999] bg-[#e6e6e6] text-[18px] text-[#444]">
      <svg className="ml-[28px] mt-[10px] h-3 w-[46px]" viewBox="0 0 46 12"><path d="M6 0v12L0 6zM36 0v12l6-6z" fill="#c0c0c0" /></svg>
      <div className="ml-[45px] mt-1 h-[26px] w-px bg-[#ababab]" />
      <div className="w-[90px] pr-[2px] pt-px text-center leading-[27px]">Legend</div>
      <div className="-mt-px h-[31px] w-[157px] whitespace-nowrap border-x border-b-2 border-x-[#ababab] border-b-[#217346] bg-white pt-px text-center text-[18.500px] font-bold leading-[28px] tracking-[-0.1px] text-[#217346]">Aska Backtest</div>
      <svg className="ml-[38px] mt-[5px] h-[23px] w-[23px]" viewBox="0 0 23 23" fill="none" stroke="#777"><circle cx="11.500" cy="11.500" r="10.500" strokeWidth="1.300" /><path d="M6.500 11.500h10M11.500 6.500v10" strokeWidth="2" /></svg>
      <div className="ml-[59px] flex flex-col gap-[3px] pt-[9px]">
        <span className="h-[3px] w-[3px] bg-[#aaa]" /><span className="h-[3px] w-[3px] bg-[#aaa]" /><span className="h-[3px] w-[3px] bg-[#aaa]" />
      </div>
      <div className="ml-[17px] mt-[3px] flex h-[26px] w-[3304px] items-stretch bg-[#dadada]">
        <ScrollArrow className="w-[25px]" d="M9 0v12L3 6z" />
        <div className="ml-[2407px] w-[294px] border border-[#ababab] bg-white" />
        <ScrollArrow className="ml-auto w-[25px]" d="M4 0v12l6-6z" />
      </div>
    </div>
  );
}

function StatusBar() {
  return (
    <div className="flex h-[31px] items-center bg-[#f3f2f1] text-[15px] text-[#444]">
      <span className="ml-[9px]">Ready</span>
      <svg className="ml-[20px] h-5 w-[22px]" viewBox="0 0 22 20">
        <rect x="3.700" y="5" width="16.600" height="14" fill="#fff" stroke="#555" strokeWidth="1.300" />
        <rect x="10" y="2" width="11" height="4" fill="#555" /><circle cx="5" cy="4.500" r="4.500" fill="#555" />
        <path d="M6 10h13M6 13h13M6 16h13" stroke="#555" strokeDasharray="3 1.500" />
      </svg>
      <div className="ml-auto flex h-[31px] w-[45px] items-center justify-center bg-[#c8c6c4]">
        <svg className="h-[19px] w-5" viewBox="0 0 20 19" fill="none" stroke="#666" strokeWidth="1.200"><path d="M0.700 0.700h18.600v17.600H0.700zM0.700 6.500h18.600M0.700 12.500h18.600M7 0.700v17.600M13 0.700v17.600" /></svg>
      </div>
      <svg className="ml-3 h-[19px] w-5" viewBox="0 0 20 19" fill="none" stroke="#666" strokeWidth="1.200"><path d="M0.700 0.700h18.600v17.600H0.700zM5 3.500h10v12H5zM7.500 6.500h5M7.500 9.500h5M7.500 12.500h5" /></svg>
      <svg className="ml-[26px] h-[19px] w-5" viewBox="0 0 20 19" fill="none" stroke="#666" strokeWidth="1.200"><path d="M0.700 0.700h18.600v17.600H0.700zM0.700 10.500h12V0.700M6.500 0.700v10" /></svg>
      <span className="ml-[18px] h-[3px] w-[12px] bg-[#666]" />
      <div className="ml-[5px] flex h-[17px] w-[149px] items-center">
        <span className="h-[2px] w-[23px] bg-[#ababab]" /><span className="h-[17px] w-2 bg-[#777]" /><span className="h-[2px] w-[43px] bg-[#ababab]" /><span className="h-2 w-[2px] bg-[#ababab]" /><span className="h-[2px] flex-1 bg-[#ababab]" />
      </div>
      <svg className="ml-[5px] h-3 w-3" viewBox="0 0 12 12"><path d="M0 6h12M6 0v12" stroke="#555" strokeWidth="2.500" /></svg>
      <span className="ml-[11px] mr-[7px] w-[34px] text-right text-[14.500px]">40%</span>
    </div>
  );
}

/* Edge of the window that sits behind this one. */
function BackWindow() {
  return (
    <div className="flex w-[11px] shrink-0 flex-col bg-[#e6e6e6]">
      <div className="h-[152px] bg-[#f3f2f1]" />
      <div className="mt-4 h-[35px] w-[5px] border border-l-0 border-[#c6c6c6] bg-white" />
      <div className="mt-4 h-[25px] w-2 border border-l-0 border-[#ababab] bg-white" />
      <div className="h-[388px] w-2 border-b border-r border-[#ababab] bg-white" />
      <div className="h-[1353px] w-2 bg-[#dadada]" />
      <div className="h-[25px] w-2 border border-l-0 border-[#ababab] bg-white" />
      <div className="mt-8 h-[33px] border-t border-[#c6c6c6] bg-[#f3f2f1]" />
      <div className="flex-1 bg-black" />
    </div>
  );
}

export default function App() {
  return (
    <div className={`flex h-[2094px] w-[3851px] overflow-hidden ${UI}`}>
      <BackWindow />
      <div className="flex w-[3840px] shrink-0 flex-col bg-[#e6e6e6]">
        <Ribbon />
        <FormulaBar />
        <Worksheet />
        <SheetTabs />
        <StatusBar />
        <div className="h-[2px] bg-[#444]" />
      </div>
    </div>
  );
}
